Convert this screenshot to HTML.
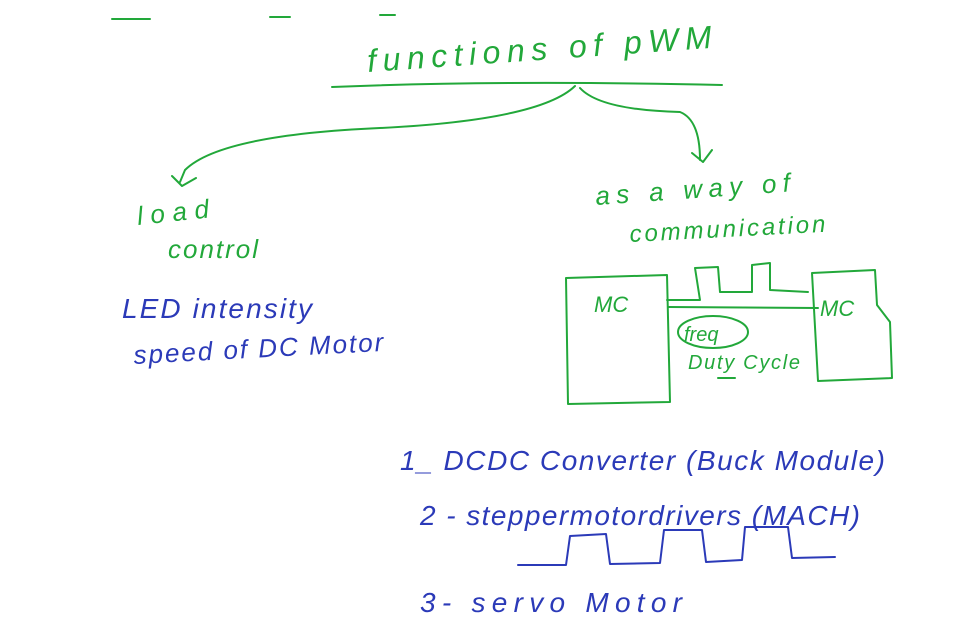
<!DOCTYPE html>
<html><head><meta charset="utf-8"><style>
html,body{margin:0;padding:0;background:#fff;width:960px;height:622px;overflow:hidden}
svg{display:block}
.g{fill:none;stroke:#22a83a;stroke-width:2;stroke-linecap:round;stroke-linejoin:round}
.b{fill:none;stroke:#2b3ab8;stroke-width:2;stroke-linecap:round;stroke-linejoin:round}
.tg{fill:#22a83a;font-family:"Liberation Sans",sans-serif;font-style:italic}
.tb{fill:#2b3ab8;font-family:"Liberation Sans",sans-serif;font-style:italic}
</style></head><body>
<svg width="960" height="622" viewBox="0 0 960 622">
<path class="g" d="M112 19 L150 19 M270 17 L290 17 M380 15 L395 15"/>
<text class="tg" x="368" y="72" font-size="32" transform="rotate(-4 368 72)" textLength="345" lengthAdjust="spacing">functions of pWM</text>
<path class="g" d="M332 87 Q500 80 722 85"/>
<path class="g" d="M575 86 Q540 120 380 128 Q220 135 185 170 L180 182 M172 176 L182 186 L196 178"/>
<path class="g" d="M580 88 Q600 110 680 112 Q700 120 700 160 M692 153 L703 162 L712 150"/>
<text class="tg" x="138" y="225" font-size="26" transform="rotate(-6 138 225)" textLength="72" lengthAdjust="spacing">load</text>
<text class="tg" x="168" y="258" font-size="26" textLength="90" lengthAdjust="spacing">control</text>
<text class="tg" x="596" y="205" font-size="26" transform="rotate(-4 596 205)" textLength="195" lengthAdjust="spacing">as a way of</text>
<text class="tg" x="630" y="242" font-size="24" transform="rotate(-3 630 242)" textLength="196" lengthAdjust="spacing">communication</text>
<text class="tb" x="122" y="318" font-size="28" textLength="190" lengthAdjust="spacing">LED intensity</text>
<text class="tb" x="134" y="364" font-size="26" transform="rotate(-3 134 364)" textLength="250" lengthAdjust="spacing">speed of DC Motor</text>
<path class="g" d="M566 278 L667 275 L670 402 L568 404 Z"/>
<text class="tg" x="594" y="312" font-size="22">MC</text>
<path class="g" d="M667 300 L700 300 L695 268 L718 267 L720 292 L752 292 L752 265 L770 263 L770 290 L808 292"/>
<path class="g" d="M668 307 L818 308"/>
<path class="g" d="M812 273 L875 270 L877 305 L890 322 L892 378 L818 381 Z"/>
<text class="tg" x="820" y="316" font-size="22">MC</text>
<ellipse class="g" cx="713" cy="332" rx="35" ry="16"/>
<text class="tg" x="684" y="341" font-size="20">freq</text>
<text class="tg" x="688" y="369" font-size="20" textLength="112" lengthAdjust="spacing">Duty Cycle</text>
<path class="g" d="M718 378 L735 378"/>
<text class="tb" x="400" y="470" font-size="28" textLength="485" lengthAdjust="spacing">1_  DCDC  Converter (Buck Module)</text>
<text class="tb" x="420" y="525" font-size="28" textLength="440" lengthAdjust="spacing">2 - steppermotordrivers (MACH)</text>
<path class="b" d="M518 565 L566 565 L570 536 L606 534 L610 564 L660 563 L664 530 L702 530 L706 562 L742 560 L745 527 L788 527 L792 558 L835 557"/>
<text class="tb" x="420" y="612" font-size="28" textLength="262" lengthAdjust="spacing">3-  servo Motor</text>
</svg>
</body></html>
